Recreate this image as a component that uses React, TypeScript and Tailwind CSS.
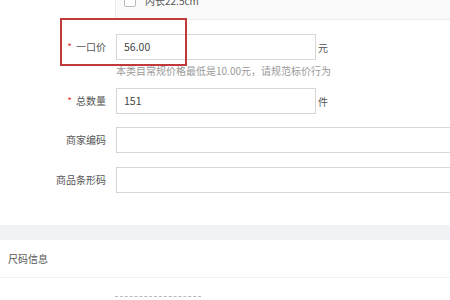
import React from "react";

const font = { fontFamily: '"Noto Sans CJK SC", "Noto Sans", sans-serif' };

function Label({ text, required }: { text: string; required?: boolean }) {
  return (
    <div className="w-[106px] shrink-0 flex justify-end items-center text-[10px] text-[#555] leading-none">
      {required && <span className="text-[#e4393c] mr-[4px] text-[10px]">*</span>}
      <span>{text}</span>
    </div>
  );
}

function Input({ value, wide }: { value?: string; wide?: boolean }) {
  return (
    <div
      className={`${wide ? "w-[360px]" : "w-[200px]"} shrink-0 h-[26px] border border-[#d6d6d6] bg-white flex items-center pl-[7px] text-[10.5px] text-[#444]`}
    >
      {value}
    </div>
  );
}

export default function App() {
  return (
    <div className="w-[450px] h-[300px] overflow-hidden bg-white relative" style={font}>
      {/* top table strip */}
      <div className="ml-[115px] h-[20px] bg-[#fafafa] border-l border-b border-[#ececec] overflow-hidden">
        <div className="flex items-center -mt-[5px] pl-[8px] gap-[9px]">
          <div className="w-[12px] h-[12px] border border-[#bbb] bg-white rounded-[2px]" />
          <span className="text-[10px] text-[#555] leading-none">内长22.5cm</span>
        </div>
      </div>

      {/* 一口价 */}
      <div className="flex items-center mt-[14px] gap-[10px]">
        <Label text="一口价" required />
        <div className="flex items-center">
          <Input value="56.00" />
          <span className="ml-[2px] text-[10px] text-[#555]">元</span>
        </div>
      </div>
      <div className="ml-[116px] mt-[3px] h-[16px] text-[10px] leading-[16px] text-[#999] whitespace-nowrap">
        本类目常规价格最低是10.00元，请规范标价行为
      </div>

      {/* 总数量 */}
      <div className="flex items-center mt-[9px] gap-[10px]">
        <Label text="总数量" required />
        <div className="flex items-center">
          <Input value="151" />
          <span className="ml-[2px] text-[10px] text-[#555]">件</span>
        </div>
      </div>

      {/* 商家编码 */}
      <div className="flex items-center mt-[13px] gap-[10px]">
        <Label text="商家编码" />
        <Input wide />
      </div>

      {/* 商品条形码 */}
      <div className="flex items-center mt-[14px] gap-[10px]">
        <Label text="商品条形码" />
        <Input wide />
      </div>

      {/* gray band */}
      <div className="mt-[32px] h-[15px] bg-[#f1f2f6]" />

      {/* 尺码信息 */}
      <div className="h-[38px] flex items-center pl-[8px] border-b border-[#f0f0f0] text-[10px] text-[#555]">
        尺码信息
      </div>

      <div className="ml-[115px] mt-[18px] w-[86px] h-[20px] border-t border-dashed border-[#bbb]" />

      {/* red highlight box */}
      <div className="absolute left-[60px] top-[18px] w-[127px] h-[48px] border-2 border-[#c0393b] pointer-events-none" />
    </div>
  );
}
